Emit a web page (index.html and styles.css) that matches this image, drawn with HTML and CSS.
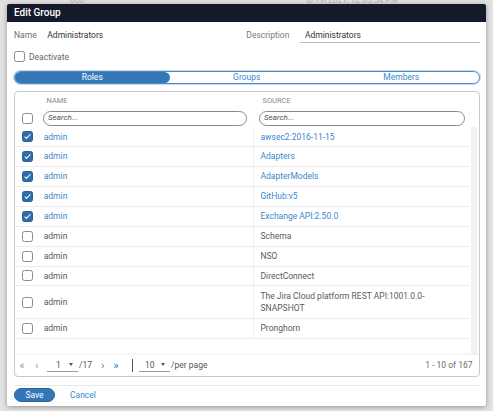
FILE: index.html
```html
<!DOCTYPE html>
<html lang="en">
  <head>
    <meta charset="UTF-8" />
    <meta name="viewport" content="width=device-width, initial-scale=1.0" />
    <title>Edit Group</title>
    <link rel="stylesheet" href="styles.css">
  </head>
  <body>
    <!-- page behind the modal -->
    <div class="backdrop">
      <div class="backdrop-top">
        <span class="bg-a">000</span>
        <span class="bg-b">8/19/2021, 12:05:54 PM</span>
      </div>
    </div>

    <!-- Edit Group modal -->
    <div class="dialog">
      <div class="dialog-header">Edit Group</div>
      <div class="dialog-body">
        <div class="fields">
          <div class="field">
            <span class="field-label">Name</span>
            <span class="field-value">Administrators</span>
          </div>
          <div class="field">
            <span class="field-label desc">Description</span>
            <span class="field-input">Administrators</span>
          </div>
        </div>

        <label class="deactivate"><span class="check"></span>Deactivate</label>

        <div class="tabs">
          <div class="tab active">Roles</div>
          <div class="tab">Groups</div>
          <div class="tab">Members</div>
        </div>

        <div class="card">
          <div class="grid-head">
            <div></div>
            <div class="col-title">NAME</div>
            <div class="col-title">SOURCE</div>
            <div class="head-check"><span class="check"></span></div>
            <div class="search">Search...</div>
            <div class="search source-search">Search...</div>
          </div>

          <div class="grid-body">
            <div class="rows">
              <div class="row">
                <div class="cell-check"><span class="check on"></span></div>
                <div class="cell link">admin</div>
                <div class="cell source link">awsec2:2016-11-15</div>
              </div>
              <div class="row">
                <div class="cell-check"><span class="check on"></span></div>
                <div class="cell link">admin</div>
                <div class="cell source link">Adapters</div>
              </div>
              <div class="row">
                <div class="cell-check"><span class="check on"></span></div>
                <div class="cell link">admin</div>
                <div class="cell source link">AdapterModels</div>
              </div>
              <div class="row">
                <div class="cell-check"><span class="check on"></span></div>
                <div class="cell link">admin</div>
                <div class="cell source link">GitHub:v5</div>
              </div>
              <div class="row">
                <div class="cell-check"><span class="check on"></span></div>
                <div class="cell link">admin</div>
                <div class="cell source link">Exchange API:2.50.0</div>
              </div>
              <div class="row">
                <div class="cell-check"><span class="check"></span></div>
                <div class="cell">admin</div>
                <div class="cell source">Schema</div>
              </div>
              <div class="row">
                <div class="cell-check"><span class="check"></span></div>
                <div class="cell">admin</div>
                <div class="cell source">NSO</div>
              </div>
              <div class="row">
                <div class="cell-check"><span class="check"></span></div>
                <div class="cell">admin</div>
                <div class="cell source">DirectConnect</div>
              </div>
              <div class="row">
                <div class="cell-check"><span class="check"></span></div>
                <div class="cell">admin</div>
                <div class="cell source">The Jira Cloud platform REST API:1001.0.0-SNAPSHOT</div>
              </div>
              <div class="row">
                <div class="cell-check"><span class="check"></span></div>
                <div class="cell">admin</div>
                <div class="cell source">Pronghorn</div>
              </div>
            </div>
            <div class="scrolltrack"></div>
          </div>

          <div class="pager">
            <span class="nav first">&laquo;</span>
            <span class="nav prev">&lsaquo;</span>
            <span class="select page-select"><span>1</span><i class="caret"></i></span>
            <span class="of">/17</span>
            <span class="nav next">&rsaquo;</span>
            <span class="nav last">&raquo;</span>
            <span class="pager-divider"></span>
            <span class="select size-select"><span>10</span><i class="caret"></i></span>
            <span class="per-page">/per page</span>
            <span class="count">1 - 10 of 167</span>
          </div>
        </div>

        <div class="footer">
          <button class="btn-save">Save</button>
          <a class="btn-cancel" href="#">Cancel</a>
        </div>
      </div>
    </div>
  </body>
</html>
```

FILE: styles.css
```css
/* Page */
body {
  margin: 0;
  height: 411px;
  overflow: hidden;
  background-color: #e2e2e2;
  font-family: Roboto, "Liberation Sans", sans-serif;
  font-size: 8.5px;
  color: #555;
}

.backdrop-top {
  display: flex;
  margin-top: -5px;
  line-height: 10px;
  color: #b5b5b5;
}

.bg-a {
  margin-left: 70px;
}

.bg-b {
  margin-left: 222px;
}

/* Modal */
.dialog {
  position: absolute;
  left: 7px;
  top: 4px;
  width: 479px;
  background-color: #fff;
  border-radius: 2px;
  box-shadow: 0 1px 5px rgba(0, 0, 0, 0.35);
  overflow: hidden;
}

.dialog-header {
  height: 18px;
  line-height: 18px;
  padding-left: 7px;
  background-color: #151a2a;
  color: #fff;
  font-size: 10px;
  font-weight: 500;
}

.dialog-body {
  padding: 0 6.5px 4.5px 7px;
}

/* Name / Description */
.fields {
  display: grid;
  grid-template-columns: 232.3px 1fr;
  margin-top: 7px;
}

.field {
  display: flex;
  line-height: 13px;
}

.field-label {
  width: 33.3px;
  color: #707070;
}

.field-label.desc {
  width: 53.7px;
  color: #7a7a7a;
}

.field-value {
  color: #333;
}

.field-input {
  flex: 1;
  padding-left: 5px;
  color: #333;
  border-bottom: 1px solid #bdbdbd;
}

/* Checkboxes */
.check {
  position: relative;
  display: inline-block;
  box-sizing: border-box;
  width: 11px;
  height: 11px;
  border: 1px solid #8c8c8c;
  border-radius: 2.5px;
  background-color: #fff;
}

.check.on {
  background-color: #2f6eab;
  border-color: #285f96;
}

.check.on:after {
  position: absolute;
  content: "";
  left: 3.2px;
  top: 1px;
  width: 2.4px;
  height: 5px;
  border-right: 1.2px solid #fff;
  border-bottom: 1.2px solid #fff;
  transform: rotate(45deg);
}

.deactivate {
  display: flex;
  align-items: center;
  height: 11px;
  margin-top: 8px;
  color: #666;
}

.deactivate .check {
  margin-right: 4px;
}

/* Tabs */
.tabs {
  display: grid;
  grid-template-columns: 1fr 1fr 1fr;
  box-sizing: border-box;
  height: 12.5px;
  margin-top: 9px;
  border: 1px solid #4a89c6;
  border-radius: 7px;
  box-shadow: 0 0 0 1px #c4dbf0;
}

.tab {
  line-height: 10.5px;
  text-align: center;
  color: #3d87cc;
}

.tab.active {
  background-color: #3678b7;
  border-radius: 7px;
  color: #fff;
}

/* Table card */
.card {
  margin-top: 7.5px;
  border: 1px solid #c9c9c9;
  border-radius: 4px;
  overflow: hidden;
}

.grid-head {
  display: grid;
  grid-template-columns: 28px 216px 1fr;
  grid-template-rows: 13px 14.5px;
  row-gap: 6px;
  padding-bottom: 1.8px;
}

.col-title {
  padding: 4px 0 0 3.5px;
  line-height: 9px;
  font-size: 7.5px;
  color: #8a8a8a;
}

.head-check {
  display: flex;
  align-items: center;
  padding-left: 6.7px;
}

.search {
  box-sizing: border-box;
  margin-right: 12px;
  padding-left: 4px;
  line-height: 12px;
  border: 1px solid #8a8a8a;
  border-bottom-width: 1.5px;
  border-radius: 8px;
  font-size: 8px;
  font-style: italic;
  color: #555;
}

.source-search {
  margin-right: 14px;
}

.grid-body {
  display: flex;
  height: 227.7px;
}

.rows {
  width: 455.3px;
}

.row {
  display: grid;
  grid-template-columns: 28px 210px 1fr;
  align-items: center;
  border-bottom: 1px solid #ececec;
}

.cell-check {
  display: flex;
  align-items: center;
  padding-left: 6.7px;
}

.cell {
  padding: 3.3px 0 3.3px 0.7px;
  line-height: 12.3px;
  color: #5a5a5a;
}

.cell.source {
  align-self: stretch;
  padding-left: 6.5px;
  padding-right: 24px;
  border-left: 1px solid #efefef;
}

.cell.link {
  color: #3b87cb;
}

.scrolltrack {
  width: 6.6px;
  margin-left: 0.4px;
  background-color: #f1f1f1;
}

/* Pagination */
.pager {
  display: flex;
  align-items: center;
  height: 21px;
  padding: 0 6px 0 4.3px;
  box-shadow: 0 -1px 2px rgba(0, 0, 0, 0.06);
}

.nav {
  font-size: 11.5px;
  line-height: 12px;
  color: #9a9a9a;
}

.first {
  width: 15.7px;
}

.prev {
  width: 12px;
}

.next {
  width: 12.3px;
  color: #3b87cb;
}

.last {
  width: 18.4px;
  color: #3b87cb;
}

.select {
  display: flex;
  align-items: center;
  box-sizing: border-box;
  width: 31px;
  height: 14px;
  border-bottom: 1px solid #9a9a9a;
  color: #555;
}

.page-select span {
  padding-left: 9px;
}

.size-select {
  width: 31.3px;
}

.size-select span {
  padding-left: 6.3px;
}

.caret {
  margin-left: auto;
  margin-right: 4.5px;
  border-left: 2.3px solid transparent;
  border-right: 2.3px solid transparent;
  border-top: 3px solid #555;
}

.of {
  width: 22px;
  margin-left: 1px;
}

.pager-divider {
  width: 1.3px;
  height: 13.7px;
  margin-right: 5.7px;
  background-color: #555;
}

.per-page {
  margin-left: 1px;
}

.count {
  margin-left: auto;
  color: #6a6a6a;
}

/* Footer */
.footer {
  display: flex;
  align-items: center;
  margin-top: 8px;
  padding-top: 2px;
  border-top: 1.5px solid #e8e8e8;
}

.btn-save {
  box-sizing: border-box;
  width: 41px;
  height: 14px;
  padding: 0;
  border: 1px solid #2a64a0;
  border-radius: 7px;
  background-color: #3376b6;
  color: #fff;
  font-family: inherit;
  font-size: 8.5px;
}

.btn-cancel {
  margin-left: 15px;
  color: #3b87cb;
  text-decoration: none;
}
```
